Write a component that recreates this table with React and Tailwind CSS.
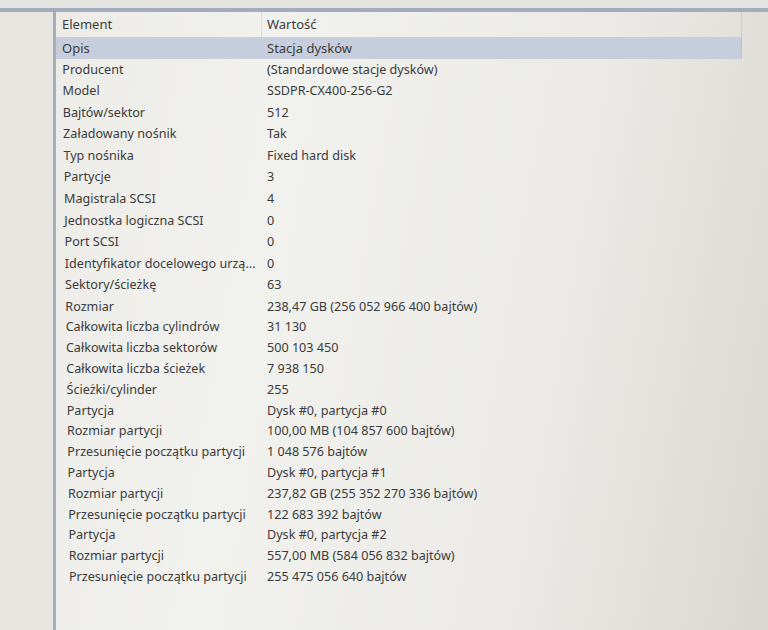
import React from "react";

const rows = [
  ["Opis", "Stacja dysków"],
  ["Producent", "(Standardowe stacje dysków)"],
  ["Model", "SSDPR-CX400-256-G2"],
  ["Bajtów/sektor", "512"],
  ["Załadowany nośnik", "Tak"],
  ["Typ nośnika", "Fixed hard disk"],
  ["Partycje", "3"],
  ["Magistrala SCSI", "4"],
  ["Jednostka logiczna SCSI", "0"],
  ["Port SCSI", "0"],
  ["Identyfikator docelowego urzą...", "0"],
  ["Sektory/ścieżkę", "63"],
  ["Rozmiar", "238,47 GB (256 052 966 400 bajtów)"],
  ["Całkowita liczba cylindrów", "31 130"],
  ["Całkowita liczba sektorów", "500 103 450"],
  ["Całkowita liczba ścieżek", "7 938 150"],
  ["Ścieżki/cylinder", "255"],
  ["Partycja", "Dysk #0, partycja #0"],
  ["Rozmiar partycji", "100,00 MB (104 857 600 bajtów)"],
  ["Przesunięcie początku partycji", "1 048 576 bajtów"],
  ["Partycja", "Dysk #0, partycja #1"],
  ["Rozmiar partycji", "237,82 GB (255 352 270 336 bajtów)"],
  ["Przesunięcie początku partycji", "122 683 392 bajtów"],
  ["Partycja", "Dysk #0, partycja #2"],
  ["Rozmiar partycji", "557,00 MB (584 056 832 bajtów)"],
  ["Przesunięcie początku partycji", "255 475 056 640 bajtów"],
];

export default function App() {
  return (
    <div
      className="w-[768px] h-[630px] overflow-hidden flex flex-col bg-[linear-gradient(100deg,#ecebe6_0%,#f1f1ee_35%,#ebeae6_70%,#d9d7d1_100%)] text-[#3b3b3b]"
      style={{ fontFamily: '"Noto Sans", "Open Sans", sans-serif' }}
    >
      <div className="h-[8px] bg-[#e3e3e0]" />
      <div className="h-[4px] bg-[#a3abbd]" />
      <div className="flex flex-1">
        <div className="w-[56px] bg-[#e6e5df] border-r-[3px] border-[#a7adb9]" />
        <div className="flex-1 flex flex-col text-[12.6px] leading-none">
          <div className="w-[686px] h-[25px] flex items-center border-r border-[#c9cbd0] text-[13px]">
            <div className="w-[206px] h-full flex items-center pl-[6px] border-r border-[#dcdcdc]">Element</div>
            <div className="pl-[5px]">Wartość</div>
          </div>
          {rows.map(([k, v], i) => (
            <div
              key={i}
              className={
                "flex items-center whitespace-nowrap " +
                (i < 12 ? "h-[21.6px] " : "h-[20.8px] ") +
                (i === 0 ? "w-[686px] h-[22px] bg-[#c6cede] border-r border-[#b9bfcc] text-[13px]" : "")
              }
            >
              <div className="w-[206px]" style={{ paddingLeft: 6 + i * 0.28 }}>
                {k}
              </div>
              <div className="pl-[5px]">{v}</div>
            </div>
          ))}
        </div>
      </div>
    </div>
  );
}
